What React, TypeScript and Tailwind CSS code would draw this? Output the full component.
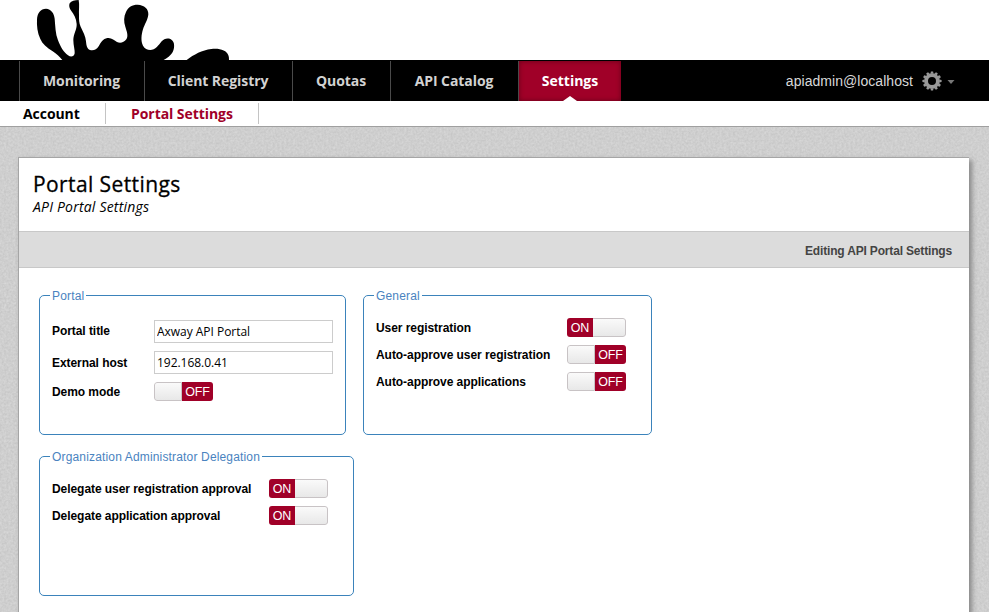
import React from 'react';

const openSans = "font-['Open_Sans',sans-serif]";

function Splash() {
  return (
    <svg className="block" width="330" height="60" viewBox="0 0 990 180">
      <path
        fill="#000"
        d="M187 180C178 169 170 163 158 154C140 143 127 131 121 117C112 99 110 78 111 58C112 39 122 26 138 26C154 27 162 40 164 56C166 78 166 101 174 121C182 141 191 157 204 166C212 172 222 171 224 160C225 150 220 137 220 120C220 103 231 88 230 72C229 55 221 42 214 33C208 25 206 17 209 10C214 2 224 0 236 0C239 15 236 30 237 46C237 59 237 70 242 80C249 95 257 109 258 124C259 136 261 147 270 150C281 153 290 148 296 139C302 128 309 116 322 114C334 112 343 121 351 126C361 131 372 127 379 118C386 107 380 94 376 80C371 65 371 50 378 36C385 21 396 14 413 14C433 15 446 27 445 43C444 59 434 72 429 88C424 104 422 124 429 137C436 149 449 153 461 148C476 141 481 124 493 118C505 112 520 118 522 132C524 149 517 162 506 170C501 174 496 177 491 180Z"
      />
      <path fill="#000" d="M560 180C582 163 606 151 634 147C659 144 680 151 685 166C687 171 687 175 687 180Z" />
    </svg>
  );
}

function Gear() {
  return (
    <svg width="20" height="20" viewBox="-10 -10 20 20">
      <circle r="5.9" fill="none" stroke="#999" strokeWidth="3.8" />
      {Array.from({ length: 12 }, (_, i) => (
        <path key={i} d="M-1.5 -7.2L-1.1 -9.6H1.1L1.5 -7.2Z" fill="#999" transform={`rotate(${i * 30})`} />
      ))}
    </svg>
  );
}

function Texture() {
  return (
    <svg className="absolute inset-0 h-full w-full" aria-hidden="true">
      <filter id="grain" x="0" y="0" width="100%" height="100%" colorInterpolationFilters="sRGB">
        <feTurbulence type="fractalNoise" baseFrequency="0.45" numOctaves="2" seed="4" />
        <feColorMatrix values="0.1 0 0 0 0.76  0.1 0 0 0 0.76  0.1 0 0 0 0.76  0 0 0 0 1" />
      </filter>
      <rect width="100%" height="100%" filter="url(#grain)" />
    </svg>
  );
}

function Toggle({ on }: { on: boolean }) {
  const label = 'flex items-center justify-center bg-[#a00028] pt-[2px] text-[12.5px] leading-none text-white';
  const knob = 'border border-[#c8c3c5] bg-linear-to-b from-[#fafafa] to-[#e8e8e8]';
  return (
    <div className="flex h-[19px] w-[59px] shrink-0 overflow-hidden rounded-[3px]">
      {on ? (
        <>
          <span className={`w-[26px] ${label}`}>ON</span>
          <span className={`flex-1 rounded-r-[3px] border-l-0 ${knob}`} />
        </>
      ) : (
        <>
          <span className={`w-[28px] rounded-l-[3px] ${knob}`} />
          <span className={`flex-1 tracking-[-0.2px] ${label}`}>OFF</span>
        </>
      )}
    </div>
  );
}

function Group({ title, className, children }: { title: string; className: string; children: React.ReactNode }) {
  return (
    <fieldset className={`h-[147px] shrink-0 rounded-[5px] border border-[#3b83bb] ${className}`}>
      <legend className="ml-[10px] px-[2px] text-[12px] leading-[15px] tracking-[0.16px] text-[#4a83c0]">
        <span className="relative top-px">{title}</span>
      </legend>
      {children}
    </fieldset>
  );
}

function Row({ label, width, className = 'h-[27px] leading-[21px]', children }: { label: string; width: string; className?: string; children: React.ReactNode }) {
  return (
    <div className={`flex items-start pl-[12px] ${className}`}>
      <label className={`shrink-0 text-[12px] font-bold tracking-[-0.06px] ${width}`}>{label}</label>
      {children}
    </div>
  );
}

const tabs = [
  { name: 'Monitoring', width: 'w-[125px]' },
  { name: 'Client Registry', width: 'w-[148px]' },
  { name: 'Quotas', width: 'w-[98px]' },
  { name: 'API Catalog', width: 'w-[128px]' },
];

export default function App() {
  const input = `h-[23px] w-[179px] border border-[#ccc] pl-[2px] text-[12px] tracking-[-0.03px] text-black outline-none ${openSans}`;
  return (
    <div className="h-[612px] w-[990px] overflow-hidden bg-white font-['Liberation_Sans',Arial,sans-serif] text-black">
      <div className="flex h-full w-[989px] flex-col">
        <header className="h-[60px] shrink-0">
          <Splash />
        </header>

        <nav className="flex h-[41px] shrink-0 bg-black pl-[19px] pt-px">
          {tabs.map((t) => (
            <a key={t.name} className={`flex items-center justify-center border-l border-[#4a4a4a] pb-[2px] pr-px text-[14px] font-bold tracking-[-0.07px] text-[#d2d2d2] ${openSans} ${t.width}`}>
              {t.name}
            </a>
          ))}
          <a className={`relative flex w-[103px] items-center justify-center border-l border-[#4a4a4a] bg-[#a00028] pb-[2px] text-[14px] font-bold text-white shadow-[inset_0_0_5px_#650019] ${openSans}`}>
            Settings
            <svg className="absolute bottom-0 left-[44px]" width="14" height="5" viewBox="0 0 14 5">
              <path d="M0 5L7 0L14 5Z" fill="#fff" />
            </svg>
          </a>
          <div className="ml-auto flex items-center pr-[34px]">
            <span className="text-[14px] tracking-[0.05px] text-[#d8d8d8]">apiadmin@localhost</span>
            <span className="ml-[9px]"><Gear /></span>
            <svg className="ml-[5px] mt-[2px]" width="8" height="4" viewBox="0 0 8 4">
              <path d="M0.5 0H7.5L4 4Z" fill="#777" />
            </svg>
          </div>
        </nav>

        <nav className={`flex h-[26px] shrink-0 items-start border-b border-[#a0a0a0] pt-[2px] text-[14px] font-bold leading-[22px] tracking-[-0.06px] ${openSans}`}>
          <a className="h-[21px] w-[106px] border-r border-[#c4c4c4] pl-[23px]">Account</a>
          <a className="h-[21px] w-[153px] border-r border-[#c4c4c4] pl-[25px] text-[#a00028]">Portal Settings</a>
        </nav>

        <main className="relative flex-1 bg-[#cdcdcd] pl-[18px] pr-[20px] pt-[30px]">
          <Texture />
          <section className="relative h-[500px] border-l border-t border-[#a5a5a5] bg-white shadow-[3px_3px_5px_#888]">
            <div className={`h-[73px] pl-[14px] pt-[13px] ${openSans}`}>
              <h1 className="text-[21px] leading-[26px] tracking-[0.4px] [-webkit-text-stroke:0.3px_#000]">Portal Settings</h1>
              <p className="text-[14px] italic leading-[19px] tracking-[0.2px]">API Portal Settings</p>
            </div>
            <div className="flex h-[37px] items-center justify-end border-y border-[#c8c8c8] bg-[#dcdcdc] pr-[17px] pt-[2px] text-[12px] font-bold tracking-[-0.17px] text-[#444]">
              Editing API Portal Settings
            </div>

            <div className="flex flex-wrap gap-x-[17px] gap-y-[14px] pl-[20px] pt-[20px]">
              <Group title="Portal" className="w-[307px]">
                <Row label="Portal title" width="w-[102px]" className="mt-[17px] h-[31px] leading-[23px]">
                  <input className={input} defaultValue="Axway API Portal" />
                </Row>
                <Row label="External host" width="w-[102px]" className="h-[31px] leading-[25px]">
                  <input className={input} defaultValue="192.168.0.41" />
                </Row>
                <Row label="Demo mode" width="w-[102px]"><Toggle on={false} /></Row>
              </Group>
              <Group title="General" className="w-[289px]">
                <div className="pt-[15px]">
                  <Row label="User registration" width="w-[191px]"><Toggle on /></Row>
                  <Row label="Auto-approve user registration" width="w-[191px]"><Toggle on={false} /></Row>
                  <Row label="Auto-approve applications" width="w-[191px]"><Toggle on={false} /></Row>
                </div>
              </Group>
              <div className="w-full">
                <Group title="Organization Administrator Delegation" className="w-[315px]">
                  <div className="pt-[15px]">
                    <Row label="Delegate user registration approval" width="w-[217px]"><Toggle on /></Row>
                    <Row label="Delegate application approval" width="w-[217px]"><Toggle on /></Row>
                  </div>
                </Group>
              </div>
            </div>
          </section>
        </main>
      </div>
    </div>
  );
}
